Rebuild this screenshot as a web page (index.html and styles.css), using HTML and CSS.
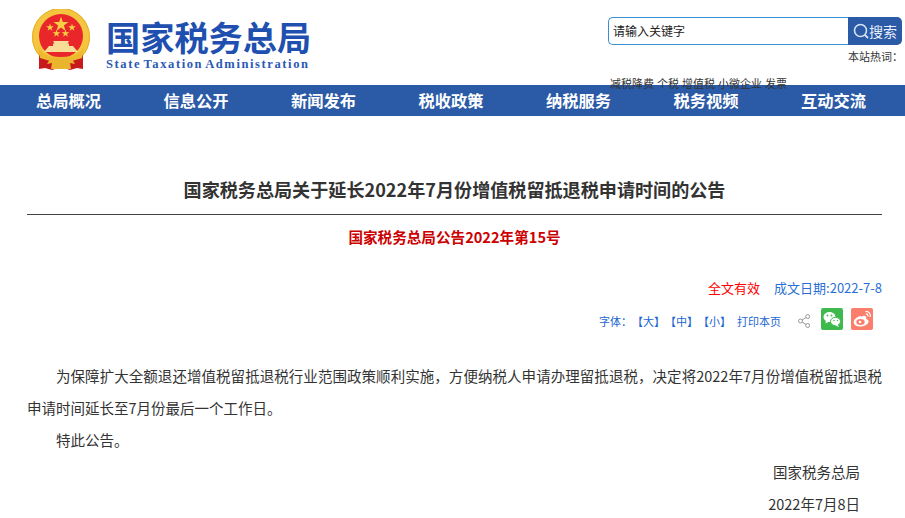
FILE: index.html
```html
<!DOCTYPE html>
<html lang="zh-CN">
<head>
<meta charset="utf-8">
<title>国家税务总局</title>
<link rel="stylesheet" href="styles.css">
</head>
<body>
<header class="top">
  <div class="brand">
    <svg class="emblem" viewBox="0 0 58 61" width="58" height="61" aria-hidden="true">
      <circle cx="29" cy="28" r="29" fill="#f4c63f"/>
      <circle cx="29" cy="28" r="28.5" fill="none" stroke="#e8ad2a" stroke-width="1"/>
      <path d="M7 46 L7 60 L13 59 L20 61 L29 58 L38 61 L45 59 L51 60 L51 46 L42 50 H16 Z" fill="#c8191d"/>
      <circle cx="29" cy="27" r="22" fill="#e9262a"/>
      <polygon points="29,7.5 30.8,13 36.5,13 31.9,16.4 33.6,22 29,18.6 24.4,22 26.1,16.4 21.5,13 27.2,13" fill="#f7cf45"/>
      <polygon points="18,14.5 18.9,17.3 21.9,17.3 19.5,19 20.4,21.8 18,20.1 15.6,21.8 16.5,19 14.1,17.3 17.1,17.3" fill="#f7cf45"/>
      <polygon points="40,14.5 40.9,17.3 43.9,17.3 41.5,19 42.4,21.8 40,20.1 37.6,21.8 38.5,19 36.1,17.3 39.1,17.3" fill="#f7cf45"/>
      <polygon points="24.5,20.5 25.4,23.3 28.4,23.3 26,25 26.9,27.8 24.5,26.1 22.1,27.8 23,25 20.6,23.3 23.6,23.3" fill="#f7cf45"/>
      <polygon points="33.5,20.5 34.4,23.3 37.4,23.3 35,25 35.9,27.8 33.5,26.1 31.1,27.8 32,25 29.6,23.3 32.6,23.3" fill="#f7cf45"/>
      <path d="M21 32 H37 L35.5 34.5 H37 V37 H41 L46 43 H12 L17 37 H21 V34.5 H22.5 Z" fill="#f8dd96"/>
      <path d="M6 37 C9 45 16 48 29 48 C42 48 49 45 52 37 L50 49 L40 52 H18 L8 49 Z" fill="#eeb92f"/>
      <path d="M18 50 C22 48 36 48 40 50 L43 55 L38 54 L39 60 H19 L20 54 L15 55 Z" fill="#eab52c"/>
    </svg>
    <div class="brand-text">
      <div class="brand-cn">国家税务总局</div>
      <div class="brand-en">State Taxation Administration</div>
    </div>
  </div>
  <div class="tools">
    <form class="search">
      <div class="search-input">请输入关键字</div>
      <button class="search-btn" type="button">
        <svg viewBox="0 0 16 16" width="16" height="16" aria-hidden="true"><circle cx="7.5" cy="7.5" r="6" fill="none" stroke="#d5e3f5" stroke-width="1.6"/><path d="M12 12 L15 15" stroke="#d5e3f5" stroke-width="1.8"/></svg>
        <span>搜索</span>
      </button>
    </form>
    <div class="hot-label">本站热词：</div>
    <div class="hot-words"><span>减税降费</span><span>个税</span><span>增值税</span><span>小微企业</span><span>发票</span></div>
  </div>
</header>
<nav class="nav">
  <a>总局概况</a><a>信息公开</a><a>新闻发布</a><a>税收政策</a><a>纳税服务</a><a>税务视频</a><a>互动交流</a>
</nav>
<main class="article">
  <h1 class="title">国家税务总局关于延长2022年7月份增值税留抵退税申请时间的公告</h1>
  <h2 class="subtitle">国家税务总局公告2022年第15号</h2>
  <div class="status"><span class="valid">全文有效</span><span class="date">成文日期:2022-7-8</span></div>
  <div class="tools-row">
    <span class="font-size">字体：【大】【中】【小】</span>
    <span class="print">打印本页</span>
    <svg class="share" viewBox="0 0 12 14" width="12" height="14" aria-hidden="true">
      <path d="M2.5 7 L9.5 2.5 M2.5 7 L9.5 11.5" stroke="#999" stroke-width="1" fill="none"/>
      <circle cx="2.5" cy="7" r="2" fill="#fff" stroke="#999"/><circle cx="9.7" cy="2.5" r="2" fill="#fff" stroke="#999"/><circle cx="9.7" cy="11.5" r="2" fill="#fff" stroke="#999"/>
    </svg>
    <svg class="social" viewBox="0 0 22 22" width="22" height="22" aria-hidden="true">
      <rect width="22" height="22" rx="2" fill="#3eb94e"/>
      <ellipse cx="8.5" cy="9" rx="6" ry="5" fill="#fff"/><path d="M5 12 L4.5 15.5 L8 13.5 Z" fill="#fff"/>
      <ellipse cx="14.5" cy="13.5" rx="5" ry="4.2" fill="#fff" stroke="#3eb94e" stroke-width="1"/><path d="M16.5 16.5 L18 19 L14.5 17.5 Z" fill="#fff"/>
      <circle cx="6.5" cy="7.5" r=".9" fill="#3eb94e"/><circle cx="10.5" cy="7.5" r=".9" fill="#3eb94e"/><circle cx="13" cy="12.5" r=".7" fill="#3eb94e"/><circle cx="16.5" cy="12.5" r=".7" fill="#3eb94e"/>
    </svg>
    <svg class="social" viewBox="0 0 22 22" width="22" height="22" aria-hidden="true">
      <rect width="22" height="22" rx="2" fill="#fb7d6b"/>
      <path d="M9.5 8 C5.5 9 2.5 12 2.7 14.5 C3 17.5 7 18.8 10.5 18.4 C14.5 18 18 15.8 17.5 13 C17.2 11.6 15.8 11.2 15 11 C15.8 9 15 7.5 12.5 7.7 C11.5 7.8 10.5 8.5 10 9 C10.2 8.2 10 8 9.5 8 Z" fill="#fff"/>
      <ellipse cx="9.5" cy="14" rx="4.2" ry="3" fill="#fb7d6b"/><circle cx="9" cy="14" r="1.3" fill="#fff"/>
      <path d="M14.5 3.5 C17.5 3.2 20 5.5 19.2 9 M14.8 6 C16.3 5.8 17.2 7 16.8 8.5" stroke="#fff" stroke-width="1.2" fill="none"/>
    </svg>
  </div>
  <div class="body">
    <p class="para">为保障扩大全额退还增值税留抵退税行业范围政策顺利实施，方便纳税人申请办理留抵退税，决定将2022年7月份增值税留抵退税申请时间延长至7月份最后一个工作日。</p>
    <p class="para">特此公告。</p>
    <p class="sign">国家税务总局</p>
    <p class="sign">2022年7月8日</p>
  </div>
</main>
</body>
</html>
```
FILE: styles.css
```css
* { box-sizing: border-box; }
html, body { margin: 0; padding: 0; }
body { width: 905px; height: 518px; overflow: hidden; background: #fff; font-family: "Noto Sans CJK SC", "Noto Sans", sans-serif; color: #333; text-spacing-trim: space-all; }
.top { height: 85px; display: flex; justify-content: space-between; align-items: flex-start; }
.brand { display: flex; margin-left: 32px; padding-top: 9px; }
.emblem { display: block; }
.brand-text { margin-left: 16px; padding-top: 10px; }
.brand-cn { font-size: 34.2px; line-height: 34px; font-weight: 700; color: #1f50b0; width: 204px; white-space: nowrap; }
.brand-en { font-family: "Liberation Serif", serif; font-size: 12.5px; line-height: 14px; font-weight: 700; color: #2a58b4; letter-spacing: 1.6px; word-spacing: -2px; white-space: nowrap; margin-top: 4px; }
.tools { width: 294px; margin-right: 3px; padding-top: 17px; }
.search { display: flex; height: 28px; }
.search-input { width: 240px; height: 28px; border: 1px solid #3a8ed2; border-right: 0; border-radius: 5px 0 0 5px; font-size: 12px; line-height: 26px; padding-left: 4px; color: #222; }
.search-btn { width: 54px; height: 28px; border: 0; padding: 0 0 0 5px; background: #2b5aa6; border-radius: 0 5px 5px 0; color: #e8f0fa; display: flex; align-items: center; gap: 0; font: 14px "Noto Sans CJK SC", sans-serif; }
.hot-label { font-size: 11px; line-height: 16px; margin-top: 3px; text-align: right; margin-right: -1px; color: #333; }
.hot-words { font-size: 11px; line-height: 16px; margin-top: 11px; margin-left: 2px; display: flex; gap: 3px; white-space: nowrap; }
.nav { height: 31px; background: #2b5aa6; display: flex; padding-left: 36px; }
.nav a { flex: none; width: 127.5px; font-size: 16.3px; line-height: 30px; font-weight: 700; color: #fff; }
.article { padding: 0 23px 0 27px; }
.title { margin: 60px 0 0; height: 39px; border-bottom: 1px solid #444; font-size: 18.1px; line-height: 27px; font-weight: 700; text-align: center; color: #333; }
.subtitle { margin: 13px 0 0; font-size: 14.6px; line-height: 18px; font-weight: 700; text-align: center; color: #cc0000; }
.status { margin-top: 33px; font-size: 13px; line-height: 18px; display: flex; justify-content: flex-end; gap: 14px; }
.valid { color: #f00; }
.date { color: #2a6fd6; }
.tools-row { margin-top: 10px; height: 24px; display: flex; justify-content: flex-end; align-items: center; padding-right: 9px; font-size: 11px; color: #1a66d0; }
.font-size, .print { padding-top: 3px; }
.print { margin-left: 6px; }
.share { margin-left: 17px; margin-top: 4px; }
.social { margin-left: 8px; }
.share + .social { margin-left: 11px; }
.body { margin-top: 29px; font-size: 14.5px; line-height: 32px; color: #333; }
.para { margin: 0; text-indent: 2em; text-align: justify; }
.sign { margin: 0; text-align: right; padding-right: 22px; }
```
